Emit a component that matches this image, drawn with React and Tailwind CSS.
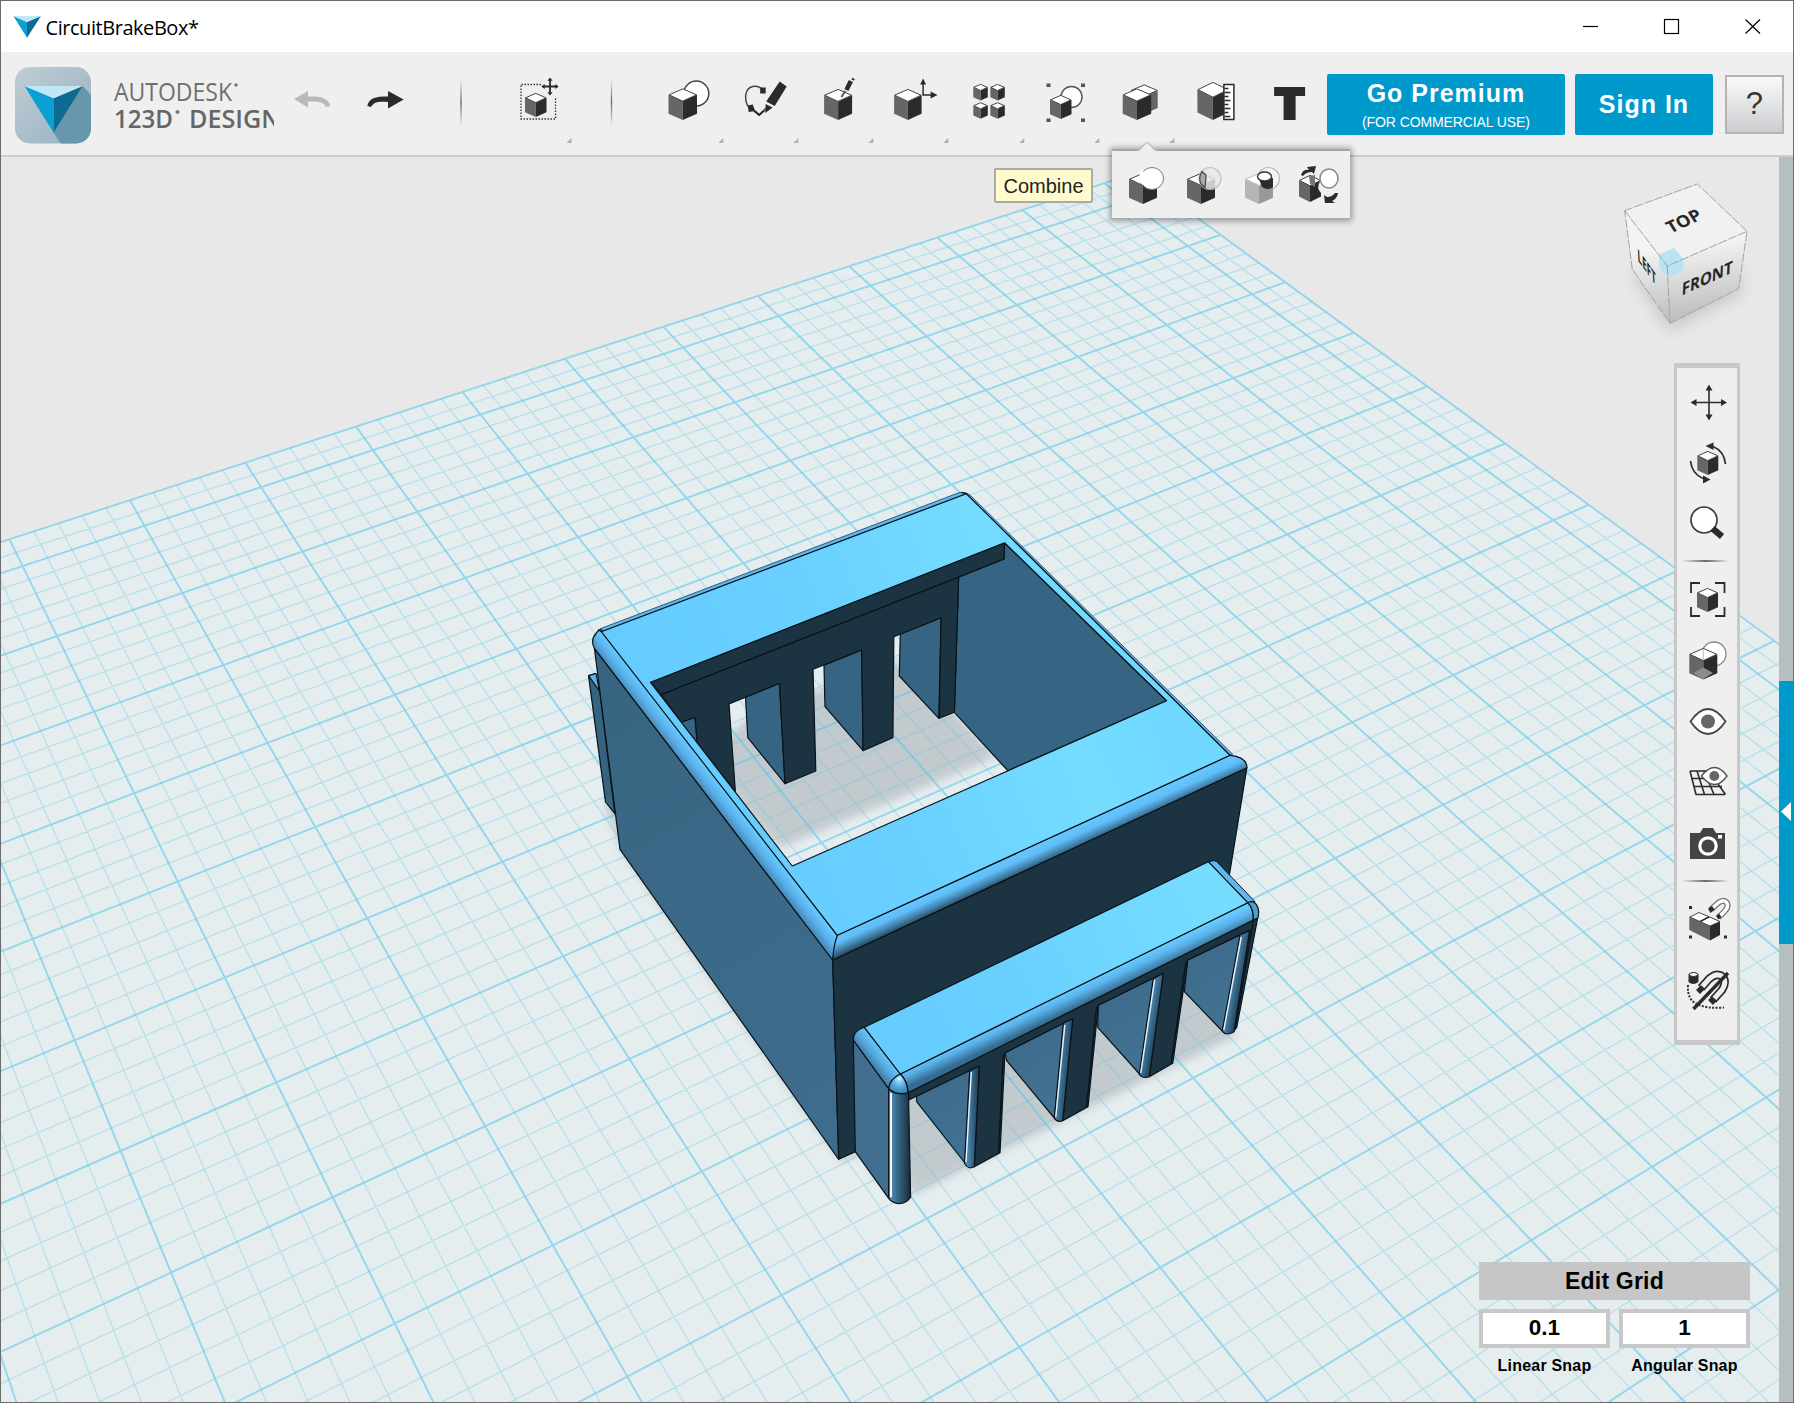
import React from "react";

const DARK = "#2b2b2b";
const MID = "#666666";

/* ---------- ground plane projection ---------- */

// Known grid intersections: [u, v, x, y]
const ANCHORS = [
  [0, -0.4, 9.8, 539.3], [0, 0, 22.3, 565.7], [0, 2, 94.2, 711.7], [0, 4, 177.7, 881.7],
  [0, 6, 276, 1083], [0, 7, 332.7, 1197], [0, 8, 394.7, 1323.3], [-1, 6, 121, 1151],
  [-1, 7, 171, 1272.3], [1, 0, 144.2, 526], [1, 7, 485.3, 1126.3], [3, 0, 373.2, 450],
  [3, 3, 516, 649], [10, 0, 1045.6, 227.9], [10, 2, 1166.1, 325], [10, 4, 1304.3, 434.6],
  [10, 7, 1549.9, 630.4], [6, 10, 1418.3, 1121.7], [7, 12, 1779, 1290.3],
  [7, 10, 1537, 1055], [5, 10, 1293, 1192.3], [5, 11, 1403, 1318], [6, 11, 1531.3, 1240], [7, 11, 1652, 1166.7],
];

function solveProjection() {
  const n = 8;
  const m = Array.from({ length: n }, () => new Array(n + 1).fill(0));
  const add = (row, rhs) => {
    for (let i = 0; i < n; i++) {
      for (let j = 0; j < n; j++) m[i][j] += row[i] * row[j];
      m[i][n] += row[i] * rhs;
    }
  };
  const s = 1000;
  for (const [u, v, px, py] of ANCHORS) {
    const x = px / s, y = py / s;
    add([u, v, 1, 0, 0, 0, -u * x, -v * x], x);
    add([0, 0, 0, u, v, 1, -u * y, -v * y], y);
  }
  for (let c = 0; c < n; c++) {
    let p = c;
    for (let r = c + 1; r < n; r++) if (Math.abs(m[r][c]) > Math.abs(m[p][c])) p = r;
    [m[c], m[p]] = [m[p], m[c]];
    for (let r = 0; r < n; r++) {
      if (r === c) continue;
      const f = m[r][c] / m[c][c];
      for (let k = c; k <= n; k++) m[r][k] -= f * m[c][k];
    }
  }
  const h = m.map((row, i) => row[n] / row[i]);
  return (u, v) => {
    const w = h[6] * u + h[7] * v + 1;
    return [(s * (h[0] * u + h[1] * v + h[2])) / w, (s * (h[3] * u + h[4] * v + h[5])) / w];
  };
}

const project = solveProjection();
const seg = (a, b) =>
  `M${a[0].toFixed(1)} ${a[1].toFixed(1)}L${b[0].toFixed(1)} ${b[1].toFixed(1)}`;

const U0 = -4, U1 = 11.4, V0 = -0.4, V1 = 14;
let minorPath = "";
let majorPath = "";
for (let i = U0 * 5; i <= 57; i++) {
  const d = seg(project(i / 5, V0), project(i / 5, V1));
  if (i % 5 === 0 || i === 57) majorPath += d;
  else minorPath += d;
}
for (let j = -2; j <= V1 * 5; j++) {
  const d = seg(project(U0, j / 5), project(U1, j / 5));
  if (j % 5 === 0 || j === -2) majorPath += d;
  else minorPath += d;
}
const planePoints = [[U0, V0], [U1, V0], [U1, V1], [U0, V1]]
  .map(([u, v]) => project(u, v).join(","))
  .join(" ");

/* ---------- model ---------- */

const FACE = "#1c3341";
const SLOT = "#427193";

function GroundShadow() {
  return (
    <g fill="#c3cace" filter="url(#soft)">
      <polygon points="720,742 747,720 817,690 895,660 954,712 996,757 780,848 735,800" />
      <polygon points="860,1080 1190,950 1236,1036 911,1196 895,1130" />
      <polygon points="603,800 622,852 840,1161 860,1154 880,1185 860,1090 640,800" />
    </g>
  );
}

function Model() {
  return (
    <g stroke="#0a1218" strokeWidth="1.2" strokeLinejoin="round">
      {/* rear tab */}
      <polygon points="588.5,675.7 595,673.5 599.6,690 614.8,813.7 605.5,802" fill="#34647f" />
      <polygon points="588.5,675.7 596,673.5 599.4,691" fill="#5ab4e8" />

      {/* inside right wall */}
      <polygon points="1004.5,542.7 1166.6,700.7 1007.7,770.7 954.4,712.3 958.6,577.3 1004,559" fill="#366583" />

      {/* slot sides seen through the opening */}
      <g fill="#366583">
        <polygon points="900.3,634 941.1,617.7 938.8,718.3 899.3,676" />
        <polygon points="824,665.3 861.7,650 863.1,750.7 825,706.7" />
        <polygon points="745.5,697.3 779.5,683.3 785,783.7 747.8,737.7" />
        <polygon points="681.2,722.3 695,717.3 697.3,743.3" />
      </g>

      {/* back wall with its pillars */}
      <polygon
        fill={FACE}
        points="661,694.5 958.6,577.3 954.4,712.3 939.3,718.3 941.1,617.7 893.8,636.7 892.9,737.7 863.1,750.7 861.7,650 813,669.3 815.8,771 785,783.7 779.5,683.3 729,704 735.4,791.7 697.3,743.3 695,717.3 681.2,722.3"
      />
      <polygon fill={FACE} points="650.5,682.3 1004.5,542.7 1004,559 661,694.5" />

      {/* left wall */}
      <polygon fill="url(#leftWall)" points="594.4,648.3 832.7,960 838.7,1159.3 620,849.3" />

      {/* front wall */}
      <polygon fill={FACE} points="832.7,960 1246.9,767.7 1228.6,880 1130,960 870,1060 855.3,1151.7 838.7,1159.3" />

      {/* rounded outer edges */}
      <path fill="#5fb6f0" stroke="#27506b" strokeWidth="0.9" d="M601.3 631.7 L600 628.8 L960 492.3 Q967 492 970 495 L1232.7 754.3 L1230 755.3 L966.4 493.7Z" />
      <path fill="url(#leftRound)" d="M594.4 648.3 Q590 640 596 633.5 Q598 630 601.3 629.5 L837.3 935.3 L832.7 960Z" />
      <path fill="url(#frontRound)" d="M837.3 935.3 L1230 755.3 Q1247 757 1246.9 767.7 L832.7 960 Q833.5 946 837.3 935.3Z" />

      {/* top face with its opening */}
      <path
        fill="url(#topFace)"
        fillRule="evenodd"
        d="M601.3 631.7 L966.4 493.7 L1230 755.3 L837.3 935.3Z M650.5 682.3 L1004.5 542.7 L1166.6 700.7 L792.3 866Z"
      />
      <path fill="none" d="M966.4 493.7 L961 492.5 M601.3 631.7 L598 629.5" />

      {/* front tab: slots */}
      <g fill="url(#slot)">
        <polygon points="916.7,1096 970,1069 965,1163 916.7,1101.7" />
        <polygon points="1005,1052.7 1065,1022 1054.3,1118 1006.7,1060.7" />
        <polygon points="1098.3,1005.3 1155,977 1140,1074.5 1097.7,1027.3" />
        <polygon points="1187.7,960 1242,934 1222.3,1031 1184.3,991.7" />
      </g>

      {/* front tab: face and legs */}
      <path
        fill={FACE}
        d="M908 1092.7 L1253.3 920 L1257.7 918 L1236.7 1027.3 L1232.5 1032 L1250 930 L1187.7 960 L1172.7 1063.3 L1149.3 1076.7 L1163.3 973.3 L1098.3 1005.3 L1088 1106.7 L1062.7 1120.7 L1072.7 1018.7 L1005 1052.7 L1000 1152.7 L974.3 1166.7 L979.3 1066 L908.7 1100Z"
      />
      <path fill="none" d="M1003.2 1054 L998.5 1153 M1096.500 1006.500 L1086.500 1107 M1186 961 L1171 1064 M1253.3 920 L1235 1030" />
      <path fill="url(#legA)" d="M969.7 1070.7 L979.3 1066 L974.3 1166.7 Q968 1170 964.5 1163.3Z" />
      <path fill="url(#legB)" d="M1063.3 1023.3 L1072.7 1018.7 L1062.7 1120.7 Q1057 1123 1054.3 1118Z" />
      <path fill="url(#legC)" d="M1153.3 978.7 L1163.3 973.3 L1149.3 1076.7 Q1142 1079 1139.3 1074Z" />
      <path fill="url(#legD)" d="M1240 935 L1249.6 930.5 L1234 1031.7 Q1226 1036.5 1222.3 1031.3Z" />
      <g stroke="#e6f3fb" strokeWidth="1.4">
        <path d="M971.3 1072 L966 1162 M1064.8 1025 L1055.8 1117 M1154.6 980 L1140.8 1073 M1241.2 937 L1223.8 1030" />
      </g>

      {/* front tab: left side and corner column */}
      <polygon fill="#426f8f" points="853.3,1040 888.7,1088.7 888.7,1198.3 855.3,1151.7" />
      <path fill="url(#column)" d="M888.7 1088.7 Q897 1096 908.5 1092.7 L910.6 1197 Q907 1203.5 899 1203.7 Q892 1203 888.7 1198.3Z" />
      <path d="M891 1093 V1197" stroke="#f2f8fc" strokeWidth="2" />
      <path fill="url(#tabLeft)" d="M864.3 1027.3 Q853 1031 853.3 1040 L888.7 1088.7 Q890 1079 900.3 1074Z" />
      <path fill="#5fb6f0" strokeWidth="1" d="M1208.3 861.7 L1214 860.5 Q1217 861 1219 864 L1255 901.7 L1247.7 902.7Z" />
      <path fill="url(#tabRound)" d="M900.3 1074 L1247.7 902.7 Q1254 909 1253.3 920 L908 1092.7 Q907.5 1081 900.3 1074Z" />
      <path fill="#4f9dd0" d="M1247.7 902.7 Q1255 899 1258 908 Q1259.5 914 1257.7 918 L1253.3 920 Q1254 909 1247.7 902.7Z" />
      <polygon fill="url(#tabTop)" points="864.3,1027.3 1208.3,861.7 1247.7,902.7 900.3,1074" />
      <path fill="url(#ball)" d="M900.3 1074 Q889.5 1079 888.7 1088.7 Q897 1096 908 1092.7 Q907.5 1081 900.3 1074Z" />
    </g>
  );
}

function ViewCube() {
  return (
    <g>
      <polygon points="1632,272 1670,330 1742,292 1735,262" fill="#9a9a9a" opacity=".45" filter="url(#cubeShadow)" />
      <polygon points="1624.7,210.7 1697.3,184 1747,231.3 1667.3,266" fill="#f1f1f1" />
      <polygon points="1624.7,210.7 1667.3,266 1670,323.3 1632.3,269.3" fill="url(#cubeSide)" />
      <polygon points="1667.3,266 1747,231.3 1738.7,288.7 1670,323.3" fill="url(#cubeSide)" />
      <polygon points="1658.7,254.7 1674,248 1683.3,259 1683,271 1668,277.7 1659.3,268.3" fill="#b9e3f2" />
      <path
        d="M1624.7 210.7 L1697.3 184 L1747 231.3 L1738.7 288.7 L1670 323.3 L1632.3 269.3Z M1624.7 210.7 L1667.3 266 L1747 231.3 M1667.3 266 L1670 323.3"
        fill="none" stroke="#a3a3a3" strokeWidth="1" strokeDasharray="9 1.5"
      />
      <g fill="#262626" fontFamily="'Open Sans', 'Noto Sans', sans-serif" fontWeight="700" textAnchor="middle">
        <text fontSize="18.500" transform="matrix(.88 -.4 .5 .78 1687 226)">TOP</text>
        <text fontSize="17" transform="matrix(.88 -.4 -.05 1 1707 284)">FRONT</text>
        <text fontSize="17" transform="matrix(.48 .66 .05 1 1647 273)">LEFT</text>
      </g>
    </g>
  );
}

function Scene() {
  return (
    <svg className="absolute inset-0 h-full w-full" viewBox="1 157 1778 1245" preserveAspectRatio="none">
      <defs>
        <filter id="soft" x="-10%" y="-10%" width="120%" height="120%"><feGaussianBlur stdDeviation="4" /></filter>
        <filter id="cubeShadow" x="-30%" y="-30%" width="160%" height="160%"><feGaussianBlur stdDeviation="8" /></filter>
        <linearGradient id="topFace" gradientUnits="userSpaceOnUse" x1="700" y1="820" x2="1130" y2="640">
          <stop offset="0" stopColor="#66ccff" /><stop offset=".35" stopColor="#68cfff" /><stop offset=".8" stopColor="#75dcff" /><stop offset="1" stopColor="#70d8ff" />
        </linearGradient>
        <linearGradient id="tabTop" gradientUnits="userSpaceOnUse" x1="900" y1="1060" x2="1200" y2="900">
          <stop offset="0" stopColor="#66ccff" /><stop offset=".4" stopColor="#69d0ff" /><stop offset="1" stopColor="#75dcff" />
        </linearGradient>
        <linearGradient id="leftWall" gradientUnits="userSpaceOnUse" x1="600" y1="700" x2="840" y2="1100">
          <stop offset="0" stopColor="#376581" /><stop offset="1" stopColor="#3e6c8d" />
        </linearGradient>
        <linearGradient id="frontRound" gradientUnits="userSpaceOnUse" x1="1033" y1="845" x2="1042" y2="865">
          <stop offset="0" stopColor="#66c8fd" /><stop offset=".4" stopColor="#60bdf8" /><stop offset=".7" stopColor="#4688b3" /><stop offset="1" stopColor="#264b63" />
        </linearGradient>
        <linearGradient id="leftRound" gradientUnits="userSpaceOnUse" x1="719" y1="783.5" x2="704.5" y2="794.7">
          <stop offset="0" stopColor="#66ccff" /><stop offset=".5" stopColor="#5ab0ea" /><stop offset="1" stopColor="#4482ae" />
        </linearGradient>
        <linearGradient id="tabLeft" gradientUnits="userSpaceOnUse" x1="882" y1="1050.5" x2="870" y2="1060">
          <stop offset="0" stopColor="#66c8fb" /><stop offset=".6" stopColor="#55a6dd" /><stop offset="1" stopColor="#4585b0" />
        </linearGradient>
        <linearGradient id="tabRound" gradientUnits="userSpaceOnUse" x1="1074" y1="988" x2="1082" y2="1005">
          <stop offset="0" stopColor="#68cbff" /><stop offset=".4" stopColor="#5ab2ea" /><stop offset="1" stopColor="#356c91" />
        </linearGradient>
        <linearGradient id="slot" x1="0" y1="0" x2=".4" y2="1">
          <stop offset="0" stopColor="#3c6a89" /><stop offset="1" stopColor={SLOT} />
        </linearGradient>
        <linearGradient id="column" x1="0" y1="0" x2="1" y2="0">
          <stop offset="0" stopColor="#5f97bd" /><stop offset=".3" stopColor="#3f7397" /><stop offset="1" stopColor="#172c39" />
        </linearGradient>
        <linearGradient id="legA" gradientUnits="userSpaceOnUse" x1="967" y1="0" x2="977" y2="0">
          <stop offset="0" stopColor="#4f8bb5" /><stop offset="1" stopColor="#24485f" />
        </linearGradient>
        <linearGradient id="legB" gradientUnits="userSpaceOnUse" x1="1057" y1="1070" x2="1069" y2="1071">
          <stop offset="0" stopColor="#4f8bb5" /><stop offset="1" stopColor="#24485f" />
        </linearGradient>
        <linearGradient id="legC" gradientUnits="userSpaceOnUse" x1="1146" y1="1025" x2="1157" y2="1027">
          <stop offset="0" stopColor="#4f8bb5" /><stop offset="1" stopColor="#24485f" />
        </linearGradient>
        <linearGradient id="legD" gradientUnits="userSpaceOnUse" x1="1231" y1="980" x2="1242" y2="982">
          <stop offset="0" stopColor="#4f8bb5" /><stop offset="1" stopColor="#24485f" />
        </linearGradient>
        <radialGradient id="ball" cx=".55" cy=".25" r=".8">
          <stop offset="0" stopColor="#ffffff" /><stop offset=".15" stopColor="#8fd6ff" /><stop offset=".5" stopColor="#55aae0" /><stop offset="1" stopColor="#3a7aa5" />
        </radialGradient>
        <linearGradient id="cubeSide" gradientUnits="userSpaceOnUse" x1="1690" y1="245" x2="1700" y2="318">
          <stop offset="0" stopColor="#f3f3f3" /><stop offset="1" stopColor="#bdbdbd" />
        </linearGradient>
      </defs>
      <polygon points={planePoints} fill="#e5edef" />
      <GroundShadow />
      <path d={minorPath} fill="none" stroke="#5cc6e4" strokeWidth="1.3" opacity=".33" />
      <path d={majorPath} fill="none" stroke="#4fc3e8" strokeWidth="1.9" opacity=".54" />
      <Model />
      <ViewCube />
    </svg>
  );
}

/* ---------- icon primitives ---------- */

function Cube({ x, y, w, h, left = MID, right = DARK, top = "#fff", edge = "#444" }) {
  const s = h * 0.2;
  const cx = x + w / 2;
  return (
    <g>
      <polygon points={`${x},${y + s} ${cx},${y + 2 * s} ${cx},${y + h} ${x},${y + h - s}`} fill={left} />
      <polygon points={`${x + w},${y + s} ${cx},${y + 2 * s} ${cx},${y + h} ${x + w},${y + h - s}`} fill={right} />
      <polygon points={`${cx},${y + 0.4} ${x + w - 0.5},${y + s} ${cx},${y + 2 * s} ${x + 0.5},${y + s}`} fill={top} stroke={edge} strokeWidth="1" />
    </g>
  );
}

function Cell({ x, y, w, h, children }) {
  return (
    <svg width={w} height={h} viewBox={`${x} ${y} ${w} ${h}`} className="block shrink-0">
      {children}
    </svg>
  );
}

function ToolCell({ x, w = 75.3, more = true, children }) {
  return (
    <Cell x={x} y={52} w={w} h={103}>
      {children}
      {more && <polygon points={`${x + w - 1},138 ${x + w - 1},143 ${x + w - 6},143`} fill="#b0b0b0" />}
    </Cell>
  );
}

function Divider({ x, w }) {
  return (
    <Cell x={x} y={52} w={w} h={103}>
      <defs>
        <linearGradient id={`div${w}`} x1="0" y1="0" x2="0" y2="1">
          <stop offset="0" stopColor="#efefef" /><stop offset=".5" stopColor="#6a6a6a" /><stop offset="1" stopColor="#efefef" />
        </linearGradient>
      </defs>
      <rect x={x + w / 2 - 0.2} y="79" width="1.4" height="47" fill={`url(#div${w})`} />
    </Cell>
  );
}

function Logo() {
  return (
    <Cell x={1} y={52} w={273} h={103}>
      <defs>
        <linearGradient id="tile" x1="0" y1="0" x2="1" y2="1">
          <stop offset="0" stopColor="#c0cdd5" /><stop offset="1" stopColor="#98b0bf" />
        </linearGradient>
        <clipPath id="tileClip"><rect x="15" y="67" width="76" height="76.500" rx="15" /></clipPath>
      </defs>
      <g clipPath="url(#tileClip)">
        <rect x="15" y="67" width="76" height="77" fill="url(#tile)" />
        <polygon points="82.7,86 92,96 92,145 62,145 53.6,132.7" fill="#6896aa" />
      </g>
      <polygon points="24.500,86 53.600,98.300 53.600,132.700" fill="#0aa0d6" />
      <polygon points="82.700,86 53.600,98.300 53.600,132.700" fill="#0d6a90" />
      <polygon points="24.500,86 82.700,86 53.600,98.300" fill="#bfe7f5" />
      <g fill="#666" fontFamily="'Open Sans', 'Noto Sans', sans-serif">
        <text x="114" y="101" fontSize="25.500" fill="#6f6f6f" textLength="118" lengthAdjust="spacingAndGlyphs">AUTODESK</text>
        <text x="114" y="127.500" fontSize="25" fontWeight="600" textLength="59" lengthAdjust="spacingAndGlyphs">123D</text>
        <text x="189" y="127.500" fontSize="25" fontWeight="600" textLength="92" lengthAdjust="spacingAndGlyphs">DESIGN</text>
      </g>
      <circle cx="236" cy="85" r="1.800" fill="#777" />
      <circle cx="177.500" cy="112" r="2" fill="#777" />
    </Cell>
  );
}

function Toolbar() {
  return (
    <div className="flex h-[105px] shrink-0 items-start border-b-2 border-[#cdcdcd] bg-[#efefef]">
      <Logo />
      <ToolCell x={274} w={75} more={false}>
        <path d="M294 99 L308 91 V96.500 C321 96 328 98 330.500 106 L326 107 C324 102 319 101 308 101.500 V107.500Z" fill="#b9b9b9" />
      </ToolCell>
      <ToolCell x={349} w={75} more={false}>
        <path d="M403.700 99.500 L388 91 V96.500 C375 96.500 369 98 367.300 106 L371 107 C374 102 378 101.500 388 102 V108.500Z" fill={DARK} />
      </ToolCell>
      <Divider x={424} w={73} />
      <ToolCell x={497} w={75.5}>
        <path d="M541 84.500 H521 V119 H555.500 V97" fill="none" stroke="#333" strokeWidth="1.300" strokeDasharray="1.500 1.500" />
        <Cube x={525} y={93} w={21.500} h={24} />
        <path d="M550 79 V94 M542.500 86.500 H557.500" stroke={DARK} strokeWidth="1.800" />
        <path d="M550 77.500 l2.600 3.200 h-5.200z M550 95.500 l2.600 -3.200 h-5.200z M541.500 86.500 l3.200 -2.600 v5.200z M558.500 86.500 l-3.200 -2.600 v5.200z" fill={DARK} />
      </ToolCell>
      <Divider x={572.5} w={76} />
      <ToolCell x={648.5}>
        <circle cx="695.800" cy="93.500" r="12.500" fill="#fff" stroke="#444" strokeWidth="1.500" />
        <Cube x={668} y={88.500} w={28.500} h={31.500} />
      </ToolCell>
      <ToolCell x={723.8}>
        <path d="M763 90 C757 84 747 85 745.500 95 C745 103 747 107 751 109 L759 115 L766 108" fill="none" stroke="#444" strokeWidth="1.500" />
        <path d="M760 87.500 h5.500 v6 h-5.500z M747.500 105.500 l5 -1 l2.500 6.500 l-6.500 1z" fill={DARK} />
        <path d="M779.500 81.500 L786.500 86.500 L774.500 106 L766 101.500Z M765.500 104 L772.500 107.500 L765 113Z" fill={DARK} />
        <path d="M754.500 111 L759 115 L764 110.500" fill="none" stroke={DARK} strokeWidth="2" />
      </ToolCell>
      <ToolCell x={799.1}>
        <Cube x={824.2} y={89} w={28} h={31} />
        <path d="M851 81 L846.500 90" stroke={DARK} strokeWidth="4.500" />
        <path d="M852 78.500 l2.500 1.500" stroke={DARK} strokeWidth="2" />
        <path d="M845.500 91 L841.500 97" stroke="#555" strokeWidth="2" />
      </ToolCell>
      <ToolCell x={874.4}>
        <Cube x={894.5} y={89} w={27.500} h={31} />
        <path d="M923.500 84 V95 H933" fill="none" stroke={DARK} strokeWidth="1.500" />
        <path d="M923.500 78.500 l3 6 h-6z M938 95 l-7 -3.500 v7z" fill={DARK} />
      </ToolCell>
      <ToolCell x={949.7}>
        <Cube x={973} y={84} w={14.500} h={16.500} />
        <Cube x={990} y={84} w={14.500} h={16.500} />
        <Cube x={973} y={102.300} w={14.500} h={16.500} />
        <Cube x={990} y={102.300} w={14.500} h={16.500} />
      </ToolCell>
      <ToolCell x={1025}>
        <g fill="#555">
          <rect x="1046.500" y="83.500" width="4" height="3.500" /><rect x="1081" y="83.500" width="4" height="3.500" />
          <rect x="1046.500" y="118.500" width="4" height="3.500" /><rect x="1081" y="118.500" width="4" height="3.500" />
        </g>
        <circle cx="1071.500" cy="97" r="10.500" fill="#fff" stroke="#555" strokeWidth="1.400" />
        <Cube x={1050} y={95} w={21.500} h={24} />
      </ToolCell>
      <ToolCell x={1100.3}>
        <Cube x={1131} y={84.500} w={27} h={29.500} left="#888" right={MID} />
        <Cube x={1123} y={88.500} w={28.500} h={31.500} />
      </ToolCell>
      <ToolCell x={1175.6} more={false}>
        <Cube x={1197} y={82} w={31} h={38} />
        <rect x="1223.500" y="84.500" width="10" height="35" fill="#fff" stroke={DARK} strokeWidth="1.500" />
        <path d="M1224 88.500h4 M1224 92.500h6 M1224 96.500h4 M1224 100.500h6 M1224 104.500h4 M1224 108.500h6 M1224 112.500h4 M1224 116.500h6" stroke={DARK} strokeWidth="1.300" />
      </ToolCell>
      <ToolCell x={1250.9} more={false}>
        <path d="M1274 87 H1305 V96 H1295.500 V120 H1283.500 V96 H1274Z" fill={DARK} />
      </ToolCell>
      <div className="mt-[22px] ml-[0.8px] flex h-[61px] w-[238px] shrink-0 flex-col items-center rounded-[2px] bg-[#0099cc] text-white">
        <div className="mt-[4px] text-[25px] leading-[30px] font-bold tracking-[1px]">Go Premium</div>
        <div className="mt-[6px] text-[14px] leading-[16px] tracking-[-0.1px]">(FOR COMMERCIAL USE)</div>
      </div>
      <div className="mt-[22px] ml-[10px] flex h-[61px] w-[138px] shrink-0 items-center justify-center rounded-[2px] bg-[#0099cc] pt-[1px] text-[25px] font-bold tracking-[1px] text-white">
        Sign In
      </div>
      <div className="mt-[23px] ml-[12px] flex h-[59px] w-[59px] shrink-0 items-center justify-center border-2 border-[#b3b3b3] bg-gradient-to-b from-[#fafafa] to-[#cbcdd0] text-[31px] text-[#333]">
        ?
      </div>
    </div>
  );
}

function TitleBar() {
  return (
    <div className="flex h-[51px] shrink-0 items-center bg-white">
      <svg width="28" height="22" viewBox="13 15 28 22" className="ml-[12px]">
        <polygon points="13.400,15 27,21 27,36.700" fill="#0aa0d6" />
        <polygon points="41,15 27,21 27,36.700" fill="#0d6a90" />
        <polygon points="13.400,15 41,15 27,21" fill="#bfe7f5" />
      </svg>
      <div className="mt-[2px] ml-[4.5px] font-['Open_Sans','Noto_Sans',sans-serif] text-[20px] leading-none tracking-[-0.45px] text-black">CircuitBrakeBox*</div>
      <svg width="200" height="51" viewBox="1570 1 200 51" className="mr-[23px] ml-auto" fill="none" stroke="#000" strokeWidth="1.200">
        <path d="M1583 26.500 H1598" />
        <rect x="1664.500" y="19.500" width="14" height="14" />
        <path d="M1745.500 19.500 L1760 33.500 M1760 19.500 L1745.500 33.500" />
      </svg>
    </div>
  );
}

function CombineMenu() {
  return (
    <div className="absolute top-[-15px] left-[1111px] h-[76px] w-[238px]">
      <div className="mt-[7px] flex h-[69px] border-t-2 border-[#a5a5a5] bg-[#efefef] shadow-[0_1px_6px_2px_rgba(0,0,0,0.35)]">
        <Cell x={1112} y={151} w={63} h={65}>
          <Cube x={1129} y={173} w={28} h={31} />
          <ellipse cx="1152" cy="178.500" rx="11.500" ry="11" fill="#fff" stroke="#777" strokeWidth="1" />
          <path d="M1142.500 171 a12 12 0 0 0 1 13" stroke="#fff" strokeWidth="3" fill="none" />
        </Cell>
        <Cell x={1175} y={151} w={58} h={65}>
          <Cube x={1187} y={173} w={28} h={31} />
          <circle cx="1210" cy="178.500" r="11" fill="#e8e8e8" opacity=".85" stroke="#bbb" strokeWidth="1.200" />
          <path d="M1202 171.500 Q1198 178 1201 184 L1205 187.500 Q1206 180 1206 175Z" fill="#aaa" stroke="#444" strokeWidth="1.200" />
        </Cell>
        <Cell x={1233} y={151} w={58} h={65}>
          <circle cx="1268.500" cy="178.500" r="11" fill="#f4f4f4" stroke="#bbb" strokeWidth="1.200" />
          <Cube x={1245} y={173} w={28} h={31} left="#b5b5b5" right="#999" edge="#bbb" />
          <path d="M1259 179 L1273 178 V187 Q1268 191 1262 187Z" fill={DARK} />
          <ellipse cx="1264.500" cy="176.500" rx="7" ry="4.500" fill="#fff" stroke="#333" strokeWidth="1.400" />
        </Cell>
        <Cell x={1291} y={151} w={58} h={65}>
          <Cube x={1299} y={175} w={22} h={27} />
          <path d="M1309 176 l6 -1 v12 l-5 -3z" fill="#777" />
          <path d="M1321 180 q-6 8 1 14 v-14z" fill="#efefef" />
          <ellipse cx="1329" cy="178.500" rx="9" ry="9.500" fill="#fff" stroke="#888" strokeWidth="1.500" />
          <path d="M1301 175 q2 -6 8 -5 l-2 -3 l9 -1 l-2 8 l-2 -2 q-6 0 -9 4z M1338 193 q-1 6 -6 8 l3 2 h-10 l-1 -8 l3 2 q5 0 8 -4z" fill={DARK} />
        </Cell>
      </div>
      <svg className="absolute top-0 left-[24px]" width="22" height="12" viewBox="0 0 22 12">
        <path d="M1 9 L11 0.500 L21 9" fill="none" stroke="#bdbdbd" strokeWidth="1.500" />
        <polygon points="1,11 11,1 21,11" fill="#efefef" />
      </svg>
    </div>
  );
}

function PanelRule() {
  return <div className="mr-[8px] ml-[5px] my-[5px] h-[2px] shrink-0 bg-gradient-to-r from-[#efefef] via-[#6a6a6a] to-[#efefef]" />;
}

function NavPanel() {
  return (
    <div className="absolute top-[206px] left-[1673px] flex h-[682px] w-[66px] flex-col border-x-[3px] border-y-[5px] border-[#c8c8c8] bg-[#efefef]">
      <Cell x={1677} y={368} w={60} h={64}>
        <path d="M1709 387 V418 M1694 402.500 H1724" stroke={DARK} strokeWidth="1.600" />
        <path d="M1709 384.500 l3.500 6 h-7z M1709 420.500 l3.500 -6 h-7z M1690.500 402.500 l6 -3.500 v7z M1727 402.500 l-6 -3.500 v7z" fill={DARK} />
      </Cell>
      <Cell x={1677} y={432} w={60} h={60}>
        <Cube x={1697.300} y={451} w={21} h={24} />
        <path d="M1713 446.500 Q1724 451 1725.500 464 M1703 478.500 Q1692 474 1690.500 461" fill="none" stroke="#333" strokeWidth="1.800" />
        <path d="M1705.500 446 l8 -3.500 v7.500z M1710.500 479.500 l-7.500 -4 v8z" fill={DARK} />
      </Cell>
      <Cell x={1677} y={492} w={60} h={63}>
        <circle cx="1704" cy="520" r="13" fill="#fff" stroke="#3a3a3a" strokeWidth="1.700" />
        <path d="M1712.500 528.500 L1722 536.500" stroke={DARK} strokeWidth="6.500" />
      </Cell>
      <PanelRule />
      <Cell x={1677} y={567} w={60} h={63}>
        <path d="M1700 583 H1691 V593 M1715 583 H1724.500 V593 M1691 607 V616 H1700 M1724.500 607 V616 H1715" fill="none" stroke={DARK} strokeWidth="1.800" />
        <Cube x={1697} y={588} w={21} h={24} />
      </Cell>
      <Cell x={1677} y={630} w={60} h={62}>
        <circle cx="1714" cy="654" r="12" fill="#fff" stroke="#888" strokeWidth="1.300" />
        <Cube x={1689.300} y={648} w={28} h={31.500} />
        <path d="M1703.300 667.500 L1713 673 L1703.300 679 L1693.500 673Z" fill="#8c8c8c" />
        <path d="M1703.300 649 V660" stroke="#bbb" strokeWidth="1" />
      </Cell>
      <Cell x={1677} y={692} w={60} h={58}>
        <path d="M1690.500 721.500 Q1699 709 1708 709 Q1717 709 1725.500 721.500 Q1717 734 1708 734 Q1699 734 1690.500 721.500Z" fill="#fff" stroke="#444" strokeWidth="1.800" />
        <circle cx="1708" cy="721.500" r="7" fill={MID} />
      </Cell>
      <Cell x={1677} y={750} w={60} h={62}>
        <path d="M1690 771 H1712 M1691.500 778.500 H1720 M1693.500 786.500 H1722 M1695.500 794.500 H1725 M1690 771 L1696 794.500 M1697 771 L1704.500 794.500 M1704 771 L1714 794.500 M1718 784 L1725.500 794.500" fill="none" stroke={DARK} strokeWidth="1.600" />
        <path d="M1701.500 776 Q1708 767.500 1714.500 767.500 Q1721 767.500 1727 776 Q1721 784.500 1714.500 784.500 Q1708 784.500 1701.500 776Z" fill="#fff" stroke="#555" strokeWidth="1.400" />
        <circle cx="1714.300" cy="776" r="5" fill={MID} />
      </Cell>
      <Cell x={1677} y={812} w={60} h={63}>
        <path d="M1690 833 H1700 L1703 828 H1713 L1716 833 H1725 V859 H1690Z" fill="#444" />
        <circle cx="1708" cy="846" r="8.200" fill="#444" stroke="#fff" strokeWidth="3.200" />
        <rect x="1718" y="835" width="4" height="3.500" fill="#fff" />
      </Cell>
      <PanelRule />
      <Cell x={1677} y={887} w={60} h={68}>
        <path d="M1689.300 917 L1710 926 V940.500 L1689.300 930Z" fill={MID} />
        <path d="M1710 926 L1720 921.500 V935 L1710 940.500Z" fill={DARK} />
        <path d="M1689.800 917 L1699 912.500 L1720 921.500 L1710 926Z" fill="#fff" stroke="#444" strokeWidth="1" />
        <path d="M1700 921.500 L1709 917" stroke={DARK} strokeWidth="1.500" />
        <path d="M1711 909.500 L1718 903 Q1724 898.500 1727 903 Q1729 907 1724 912 L1718.500 917.500" fill="none" stroke="#777" strokeWidth="6" />
        <path d="M1711 909.500 L1718 903 Q1724 898.500 1727 903 Q1729 907 1724 912 L1718.500 917.500" fill="none" stroke="#fff" strokeWidth="3.400" />
        <path d="M1708 908.500 l4 -2.500 l2.500 3.500 l-4 3.500z M1716 916 l3 -2.500 l2.500 3.500 l-3 2.500z" fill={DARK} />
        <path d="M1689 906h3v3h-3z M1689 935.500h3v3h-3z M1724 935.500h3v3h-3z" fill={DARK} />
      </Cell>
      <Cell x={1677} y={955} w={60} h={80}>
        <path d="M1688.500 974 Q1693 971 1698.500 974 V982 Q1693 986 1688.500 982Z" fill={DARK} />
        <ellipse cx="1693.500" cy="974.500" rx="4" ry="2" fill="#fff" stroke={DARK} />
        <path d="M1688 985 Q1687 1000 1697 1004 Q1707 1009 1724 1007.500" fill="none" stroke={DARK} strokeWidth="2" strokeDasharray="2 1.500" />
        <path d="M1701 988 L1709 979 Q1717 972 1723 977 Q1727 982 1722 990 L1713 1000" fill="none" stroke={DARK} strokeWidth="8.500" />
        <path d="M1701 988 L1709 979 Q1717 972 1723 977 Q1727 982 1722 990 L1713 1000" fill="none" stroke="#efefef" strokeWidth="5" />
        <path d="M1696 990 l5 -5 l4 4 l-5 5z M1708 1000 l4 -3.500 l5 4 l-4 4.500z" fill={DARK} />
        <path d="M1728 973 L1693.500 1009" stroke={DARK} strokeWidth="3.400" />
      </Cell>
    </div>
  );
}

function SnapField({ value, label }) {
  return (
    <div className="flex w-[131px] flex-col items-center">
      <div className="flex h-[39px] w-full items-center justify-center border-4 border-[#c8c8c8] bg-white text-[22.5px] leading-none font-bold">{value}</div>
      <div className="mt-[9px] text-[16px] leading-[18px] font-bold tracking-[0.2px] whitespace-nowrap">{label}</div>
    </div>
  );
}

function SnapPanel() {
  return (
    <div className="absolute top-[1105px] left-[1478px] w-[271px] text-black">
      <div className="flex h-[38px] items-center justify-center bg-[#c6c6c6] text-[23px] leading-none font-bold tracking-[0.2px]">Edit Grid</div>
      <div className="mt-[9px] flex justify-between">
        <SnapField value="0.1" label="Linear Snap" />
        <SnapField value="1" label="Angular Snap" />
      </div>
    </div>
  );
}

export default function App() {
  return (
    <div className="flex h-[1403px] w-[1794px] flex-col overflow-hidden border border-[#6b6b6b] bg-[#e8e8e8] font-['Liberation_Sans',Arial,sans-serif]">
      <TitleBar />
      <Toolbar />
      <div className="relative flex min-h-0 flex-1">
        <div className="relative flex-1 bg-[#e8e8e8]">
          <Scene />
        </div>
        <div className="flex w-[14px] flex-col bg-[#b5bfbf]">
          <div className="mt-[524px] flex h-[263px] items-center justify-center bg-[#0099cc] pb-[2px]">
            <svg width="10" height="19" viewBox="0 0 10 19"><polygon points="10,0 0,9.500 10,19" fill="#fff" /></svg>
          </div>
        </div>
        <div className="absolute top-[11px] left-[993px] flex h-[35px] w-[99px] items-center justify-center rounded-[2px] border-2 border-[#aaaaaa] bg-[#fffbcf] text-[20px] leading-none text-[#222]">
          Combine
        </div>
        <CombineMenu />
        <NavPanel />
        <SnapPanel />
      </div>
    </div>
  );
}
